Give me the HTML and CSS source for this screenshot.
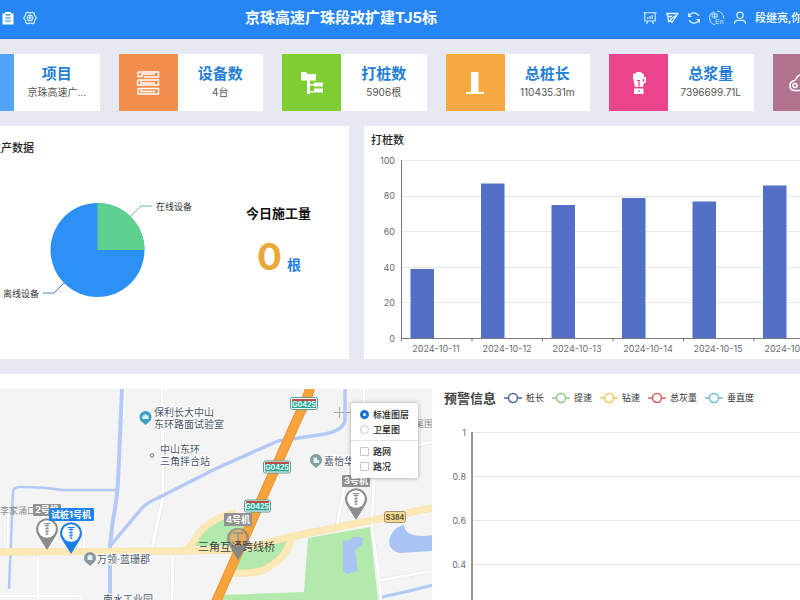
FILE: index.html
```html
<!DOCTYPE html>
<html lang="zh-CN">
<head>
<meta charset="utf-8">
<title>京珠高速广珠段改扩建TJ5标</title>
<link rel="stylesheet" href="styles.css">
</head>
<body>
<header class="topbar">
  <nav class="tools" aria-label="菜单">
    <button class="icon-btn" aria-label="记录"><svg width="14" height="14" viewBox="0 0 14 14"><path d="M1.5 2.5H4V1H10V2.5H12.5V13.5H1.5Z" fill="#fff"/><path d="M4.5 3.8H9.5M4 7H10M4 10H10" stroke="#2786f6" stroke-width="1.2"/></svg></button>
    <button class="icon-btn" aria-label="设置"><svg width="14" height="14" viewBox="0 0 14 14" fill="none" stroke="#d8f2ff" stroke-width="1.2" stroke-linejoin="round"><path d="M4.5 1.2L5.800 1.800H8.200L9.500 1.200L11.300 2.300L11.200 3.700L12.400 5.600L13.400 7L12.400 8.400L11.200 10.300L11.300 11.700L9.500 12.800L8.200 12.200H5.800L4.500 12.800L2.700 11.700L2.800 10.300L1.600 8.400L.6 7L1.600 5.600L2.800 3.700L2.700 2.300Z"/><path d="M5.500 4.400H8.500L10 7L8.500 9.600H5.500L4 7Z"/><circle cx="7" cy="7" r=".8"/></svg></button>
  </nav>
  <h1>京珠高速广珠段改扩建TJ5标</h1>
  <div class="user">
    <button class="icon-btn" aria-label="大屏"><svg width="14" height="14" viewBox="0 0 14 14" fill="none" stroke="#d8f2ff" stroke-width="1.1"><path d="M.5 1.800H13.500M1.800 1.800V10H12.200V1.800M4.800 10L3.500 13M9.200 10L10.500 13M4.800 6V8M7 5V8M9.200 4V8"/></svg></button>
    <button class="icon-btn" aria-label="发送"><svg width="14" height="14" viewBox="0 0 14 14" fill="none" stroke="#e6f6ff" stroke-width="1.3" stroke-linejoin="round"><path d="M1.500 2.500H13L7 11.500L5.200 9M1.500 2.500L3 5.500H7M3 5.500L3.500 11L5.200 9L10.500 4.500"/></svg></button>
    <button class="icon-btn" aria-label="刷新"><svg width="14" height="14" viewBox="0 0 14 14" fill="none" stroke="#d8f2ff" stroke-width="1.2"><path d="M2 5.200A5.300 5.300 0 0 1 11.800 5M12 8.800A5.300 5.300 0 0 1 2.200 9M1.600 2.300V5.300H4.500M12.400 11.700V8.700H9.500"/></svg></button>
    <button class="icon-btn" aria-label="语言"><svg width="16" height="16" viewBox="0 0 16 16" fill="none" stroke="#c9ebff"><path d="M6 14.800A7 7 0 0 1 5 1.500M8 1A7 7 0 0 1 14.600 8.500"/><path d="M3.200 4H8.200V7H3.200ZM5.700 2.500V9"/><text x="6" y="14" class="lang">En</text></svg></button>
    <button class="icon-btn" aria-label="用户"><svg width="14" height="14" viewBox="0 0 14 14" fill="none" stroke="#d8f2ff" stroke-width="1.2"><circle cx="7" cy="4.300" r="3.200"/><path d="M1.500 13V12.200Q1.500 9.300 4.500 9.300H9.500Q12.500 9.300 12.500 12.200V13"/></svg></button>
    <span>段继亮,你好</span>
  </div>
</header>

<main>
<section class="cards">
  <article class="card"><div class="card-icon sky"></div><div class="card-body"><h2>项目</h2><p>京珠高速广...</p></div></article>
  <article class="card"><div class="card-icon orange"><svg width="24" height="24" viewBox="0 0 24 24" fill="none" stroke="#fff" stroke-width="1.4"><path d="M2 1V5.500H6V3H19M2 1H22.500V6H8M1.500 9V14H22.500V9H5V12H19M1.500 9H5M2 17.500V23H22.500V17.500H5V20.500H19M2 17.500H5"/></svg></div><div class="card-body"><h2>设备数</h2><p>4台</p></div></article>
  <article class="card"><div class="card-icon green"><svg width="24" height="24" viewBox="0 0 24 24" fill="#fff"><path d="M1 1H6L7.500 3H16V9.500H10V13H14V11.500H23V15.500H14V14.500H10V20H14V17.500H23V21.500H10V23H7V9.500H1Z"/></svg></div><div class="card-body"><h2>打桩数</h2><p>5906根</p></div></article>
  <article class="card"><div class="card-icon amber"><svg width="24" height="24" viewBox="0 0 24 24" fill="#fff"><path d="M8 1H15.500V21H21V23H3V21H8Z"/></svg></div><div class="card-body"><h2>总桩长</h2><p>110435.31m</p></div></article>
  <article class="card"><div class="card-icon pink"><svg width="24" height="24" viewBox="0 0 24 24"><path d="M6 3L9 2L10 1H14L15 2.500L17 3V6H19V11L16.500 13L16 16H8L6 7ZM7 17.500H16.500V23H7Z" fill="#fff"/><path d="M12 9V16M10 9.500H13M16.500 7.500V11M11 20H13" stroke="#ec448c" stroke-width="1.2"/></svg></div><div class="card-body"><h2>总浆量</h2><p>7396699.71L</p></div></article>
  <article class="card"><div class="card-icon mauve"><svg width="28" height="24" viewBox="0 0 28 24" fill="none" stroke="#fff" stroke-width="1.6"><path d="M6 19.500A5 5 0 0 1 5 10Q7 10 8 8A7 7 0 0 1 21 8Q26 9 26 14T21 19.500Z"/><circle cx="7" cy="14.500" r="2"/><path d="M12 14H19"/></svg></div><div class="card-body"><h2>总灰量</h2><p>0t</p></div></article>
</section>

<section class="panels">
  <article class="panel production">
    <h3>生产数据</h3>
    <div class="production-body">
      <svg class="pie" width="210" height="110" viewBox="0 195 210 110">
        <circle cx="97.500" cy="250" r="47" fill="#2c90f4"/>
        <path d="M97.500 250V203A47 47 0 0 1 144.500 250Z" fill="#5dd18e"/>
        <path d="M131 216L141 206H152" fill="none" stroke="#62b99b"/>
        <path d="M64 283L54 293H43" fill="none" stroke="#4a86b8"/>
        <text x="156" y="210" class="pie-label">在线设备</text>
        <text x="3" y="297" class="pie-label">离线设备</text>
      </svg>
      <div class="today"><h4>今日施工量</h4><p><strong>0</strong><span>根</span></p></div>
    </div>
  </article>
  <article class="panel piles">
    <h3>打桩数</h3>
    <svg class="bar-chart" width="436" height="212" viewBox="364 147 436 212">
      <path d="M401 160.500H800M401 196.500H800M401 231.500H800M401 267.500H800M401 302.500H800" stroke="#e3e8ef"/>
      <g fill="#546fc6">
        <rect x="410.500" y="269" width="23.500" height="69"/>
        <rect x="481" y="183.500" width="23.500" height="155"/>
        <rect x="551.500" y="205" width="23.500" height="133"/>
        <rect x="622" y="198" width="23.500" height="140"/>
        <rect x="692.500" y="201.500" width="23.500" height="137"/>
        <rect x="763" y="185.500" width="23.500" height="153"/>
      </g>
      <path d="M401.500 160V341M401 338.500H800M472 338V341.500M542.500 338V341.500M613 338V341.500M683.500 338V341.500M754 338V341.500" stroke="#74777e" fill="none"/>
      <g class="tick end"><text x="395" y="164">100</text><text x="395" y="199">80</text><text x="395" y="235">60</text><text x="395" y="271">40</text><text x="395" y="306">20</text><text x="395" y="342">0</text></g>
      <g class="tick mid"><text x="436" y="352">2024-10-11</text><text x="507" y="352">2024-10-12</text><text x="577" y="352">2024-10-13</text><text x="648" y="352">2024-10-14</text><text x="718" y="352">2024-10-15</text><text x="789" y="352">2024-10-16</text></g>
    </svg>
  </article>
</section>

<section class="bottom">
  <div class="map">
    <svg class="map-canvas" viewBox="0 389 432 211" preserveAspectRatio="xMinYMin slice">
      <rect y="389" width="432" height="211" fill="#f4f4f4"/>
      <path d="M308 538L370 527L378 600H218L222 595L304 592Z" fill="#b2eaae"/>
      <path d="M190 546Q202 525 225 518H251L239 546Z" fill="#b2eaae"/>
      <path d="M243 552Q265 545 287 541Q283 560 262 568Q248 571 232 575Z" fill="#b2eaae"/>
      <g fill="none" stroke="#e0e0e0" stroke-width="4">
        <path d="M162 389L163 497L152 548M125 389L124 418M38 557V601M173 557L172 601M84 528V550M0 596H81V601M8 505V550"/>
        <path d="M348 470L337 525M364 389V412L374 478L372 527L382 601M382 580L432 571M417 445L432 442"/>
      </g>
      <g fill="none" stroke="#fff" stroke-width="3">
        <path d="M162 389L163 497L152 548M125 389L124 418M38 557V601M173 557L172 601M84 528V550M0 596H81V601M8 505V550"/>
        <path d="M348 470L337 525M364 389V412L374 478L372 527L382 601M382 580L432 571M417 445L432 442"/>
      </g>
      <g fill="none" stroke="#b3c9f6" stroke-linejoin="round">
        <path d="M122 389L118 482Q117 500 113 520L110 545V601" stroke-width="4"/>
        <path d="M9 589L13 492Q13 487 20 487Q45 487 62 490L117 490" stroke-width="2.5"/>
        <path d="M111 545L142 508Q148 502 158 498L215 469Q258 450 278 441L325 434Q344 430 345 420V389" stroke-width="3.5"/>
        <path d="M382 597L405 592L433 585" stroke-width="3"/>
      </g>
      <path d="M343 541L350 540L353 537L363 537L362 545L355 550L358 571L347 574L343 571ZM403 525Q391 529 389 541Q389 551 400 553L433 551V535Q405 539 404 525Z" fill="#aac4f4"/>
      <g fill="none" stroke="#f7e0a2" stroke-width="7"><path d="M0 552L182 551Q190 550 197 536Q207 520 236 512"/><path d="M182 551L238 550L290 537L432 508"/><path d="M291 537Q288 558 263 570Q252 574 230 573"/></g>
      <g fill="none" stroke="#fde9b5" stroke-width="6"><path d="M0 552L182 551Q190 550 197 536Q207 520 236 512"/><path d="M182 551L238 550L290 537L432 508"/><path d="M291 537Q288 558 263 570Q252 574 230 573"/></g>
      <path d="M310 388Q307 400 299 415L216 602" fill="none" stroke="#e6983d" stroke-width="10"/>
      <path d="M310 388Q307 400 299 415L216 602" fill="none" stroke="#f8a33b" stroke-width="8"/>
      <path d="M334 412.500H344M339.500 407V418M346 412.500H352" stroke="#aaa"/>

      <g class="place">
        <text x="154" y="416">保利长大中山</text><text x="154" y="428">东环路面试验室</text>
        <text x="160" y="453">中山东环</text><text x="160" y="465">三角拌合站</text>
        <text x="97" y="563">万领·蓝珊郡</text><text x="103" y="603">南水工业园</text><text x="324" y="465">嘉怡华庭</text>
      </g>
      <g class="village"><text x="0" y="514">李家涌口</text><text x="415" y="427">尾围</text></g>
      <circle cx="152" cy="455.500" r="1.700" fill="#fff" stroke="#6b7488"/>
      <path d="M145.500 425L141.500 421.500A6 6 0 1 1 149.500 421.500Z" fill="#3d9fc6"/>
      <path d="M142.500 419V416L145.500 414L148.500 416V419Z" fill="#d8f3fb"/>
      <path d="M90 566L85.500 562A6 6 0 1 1 94.500 562Z" fill="#8798a3"/>
      <path d="M316 468L311.500 464A6 6 0 1 1 320.500 464Z" fill="#7e9f9d"/>
      <path d="M87.500 560V556L90 554.500L92.500 556V560ZM313.500 463V457.500H317V460H319V463Z" fill="#e5edf0"/>

      <g class="shield">
        <rect x="290.500" y="397.500" width="27" height="12" rx="2" fill="#fff" stroke="#579b91"/><rect x="292" y="399" width="24" height="9" fill="#28a493"/><rect x="292" y="399" width="24" height="2" fill="#bf4a43"/><text x="304" y="407">G0425</text>
        <rect x="263.500" y="461" width="27" height="12" rx="2" fill="#fff" stroke="#579b91"/><rect x="265" y="462.500" width="24" height="9" fill="#28a493"/><rect x="265" y="462" width="24" height="2" fill="#bf4a43"/><text x="277" y="470">G0425</text>
        <rect x="244.500" y="500" width="26" height="12" rx="2" fill="#fff" stroke="#579b91"/><rect x="246" y="501.500" width="23" height="9" fill="#28a493"/><rect x="246" y="501" width="23" height="2" fill="#bf4a43"/><text x="257" y="509">G0425</text>
        <rect x="384.500" y="511.500" width="21" height="11" rx="2" fill="#f5dc96" stroke="#9c9170"/><text x="395" y="520" class="dark">S384</text>
      </g>

      <defs>
        <g id="pin"><path d="M0 21L-9 6.500A11 11 0 1 1 9 6.500Z"/><circle r="8.800" fill="#fff"/><path d="M-3.500 -5.500H3.500M-2.500 -3.500H2.500M0 -5V6M-2 0L2 -1M-2 3L2 2M-1 5.500L1.500 5" stroke="currentColor"/></g>
      </defs>
      <use href="#pin" x="47" y="529" fill="#8c8c8c" color="#8c8c8c"/>
      <use href="#pin" x="356" y="499" fill="#8c8c8c" color="#8c8c8c"/>
      <g opacity=".8"><path d="M238 560L229 545A11 11 0 1 1 247 545Z" fill="#858585"/><circle cx="238" cy="538" r="8.500" fill="#e6a75d"/><path d="M233 533H243M238 533V545" stroke="#858585" stroke-width="1.5"/></g>
      <text x="198" y="551" class="bridge">三角互通跨线桥</text>
      <path d="M238 560L230 546H246Z" fill="#858585"/>
      <use href="#pin" x="71" y="533" fill="#1b7fe6" color="#1b7fe6"/>
      <g class="machine" fill="#929292">
        <rect x="33" y="504" width="28" height="12" rx="1"/><text x="47" y="513">2号机</text>
        <rect x="342" y="475" width="28" height="12" rx="1"/><text x="356" y="484">3号机</text>
        <rect x="224" y="513" width="28" height="13" rx="1"/><text x="238" y="523">4号机</text>
        <rect x="49" y="508" width="45" height="13" rx="1" fill="#1f83eb"/><text x="71" y="518">试桩1号机</text>
      </g>
    </svg>
    <form class="layers">
      <label><input type="radio" name="layer" checked>标准图层</label>
      <label><input type="radio" name="layer">卫星图</label>
      <hr>
      <label><input type="checkbox">路网</label>
      <label><input type="checkbox">路况</label>
    </form>
  </div>
  <article class="alerts">
    <div class="alerts-head">
      <h3>预警信息</h3>
      <ul class="legend">
        <li class="navy"><svg width="18" height="12" viewBox="0 0 18 12"><path d="M0 6H18"/><circle cx="9" cy="6" r="4.500"/></svg>桩长</li>
        <li class="leaf"><svg width="18" height="12" viewBox="0 0 18 12"><path d="M0 6H18"/><circle cx="9" cy="6" r="4.500"/></svg>提速</li>
        <li class="gold"><svg width="18" height="12" viewBox="0 0 18 12"><path d="M0 6H18"/><circle cx="9" cy="6" r="4.500"/></svg>钻速</li>
        <li class="red"><svg width="18" height="12" viewBox="0 0 18 12"><path d="M0 6H18"/><circle cx="9" cy="6" r="4.500"/></svg>总灰量</li>
        <li class="cyan"><svg width="18" height="12" viewBox="0 0 18 12"><path d="M0 6H18"/><circle cx="9" cy="6" r="4.500"/></svg>垂直度</li>
      </ul>
    </div>
    <svg class="line-chart" width="356" height="180" viewBox="444 420 356 180">
      <path d="M472 432.500H800M472 476.500H800M472 520.500H800M472 564.500H800" stroke="#e4e6ea"/>
      <path d="M472 432V600" stroke="#96989c" stroke-width="2"/>
      <g class="tick end"><text x="466" y="436">1</text><text x="466" y="480">0.8</text><text x="466" y="524">0.6</text><text x="466" y="568">0.4</text></g>
    </svg>
  </article>
</section>
</main>
</body>
</html>
```
FILE: styles.css
```css
* { box-sizing: border-box; }
body {
  margin: 0;
  min-height: 100vh;
  display: flex;
  flex-direction: column;
  overflow: hidden;
  background: #e6e8f2;
  color: #222;
  font: 10px/16px Inter, "Noto Sans CJK SC", sans-serif;
}
h1, h2, h3, h4, p, ul { margin: 0; padding: 0; }
svg { display: block; flex: none; }

.topbar {
  display: grid;
  grid-template-columns: 245px 398px auto;
  align-items: center;
  height: 39px;
  padding-bottom: 3px;
  background: #2786f6;
  border-bottom: 1px solid #1f72d8;
  color: #fff;
  white-space: nowrap;
}
.topbar h1 { font-size: 15px; line-height: 20px; font-weight: 700; }
.tools, .user { display: flex; align-items: center; gap: 8px; }
.tools { padding-left: 1px; }
.user span { font-size: 11px; font-weight: 500; }
.icon-btn { display: block; padding: 0; border: 0; background: none; }
.lang { fill: #c9ebff; stroke: none; font-size: 7px; }

main { flex: 1; display: flex; flex-direction: column; }
.cards {
  display: grid;
  grid-template-columns: repeat(6, 1fr);
  gap: 19px;
  width: calc(100% + 162px);
  margin: 15px 0 15px -45px;
}
.card { display: grid; grid-template-columns: 59px 1fr; height: 57px; background: #fff; }
.card-icon { display: grid; place-items: center; }
.card-body { padding-top: 10px; text-align: center; }
.card-body h2 { color: #2480d4; font-size: 15px; line-height: 20px; }
.card-body p { color: #555; }
.sky { background: #51a5f6; }
.orange { background: #f38e4c; }
.green { background: #7fce34; }
.amber { background: #f6a940; }
.pink { background: #ec448c; }
.mauve { background: #b1738e; }

.panels { display: grid; grid-template-columns: 375px 1fr; gap: 15px; margin-left: -26px; }
.panel { min-height: 233px; background: #fff; overflow: hidden; }
.panel h3 { font-size: 11px; line-height: 16px; font-weight: 500; }
.production { padding: 14px 0 0 16px; }
.production-body { display: flex; gap: 36px; padding: 39px 0 0 10px; }
.pie-label { font-size: 9px; fill: #333; }
.today { padding-top: 8px; }
.today h4 { color: #111; font-size: 13px; line-height: 20px; }
.today p { display: flex; align-items: baseline; gap: 5px; padding: 12px 0 0 11px; line-height: 44px; }
.today strong { color: #eaa93c; font-size: 37px; }
.today span { color: #2480e0; font-size: 14px; font-weight: 700; }
.piles h3 { padding: 6px 0 0 7px; height: 21px; }
.tick { font-size: 9px; fill: #686b72; }
.end { text-anchor: end; }
.mid { text-anchor: middle; }

.bottom {
  flex: 1;
  display: grid;
  grid-template-columns: 54% 1fr;
  margin-top: 15px;
  padding-top: 15px;
  background: #fff;
}
.map { position: relative; }
.map-canvas { width: 100%; height: 100%; }
.place { font-size: 10px; fill: #49536b; stroke: #fff; stroke-width: 2px; paint-order: stroke; }
.village { font-size: 9px; fill: #8c8c8c; }
.bridge { font-size: 11px; fill: #404040; }
.shield { font-size: 7px; font-weight: 700; fill: #e9fffb; text-anchor: middle; }
.dark { fill: #57502f; }
.machine { font-size: 9px; font-weight: 700; text-anchor: middle; }
.machine text { fill: #fff; }
.layers {
  position: absolute;
  top: 14px;
  right: 14px;
  width: 67px;
  padding: 4px 0;
  border-radius: 2px;
  background: #fff;
  box-shadow: 0 0 4px rgba(0, 0, 0, .35);
  color: #222;
  font-size: 9px;
  font-weight: 500;
}
.layers label { display: flex; align-items: center; gap: 4px; height: 15px; padding-left: 9px; white-space: nowrap; }
.layers input { appearance: none; width: 9px; height: 9px; margin: 0; border: 1px solid #c4c8ce; border-radius: 1px; background: #fff; }
.layers input[type="radio"] { border-radius: 50%; }
.layers input:checked { border: 3px solid #1775d1; }
.layers hr { margin: 3px 0; border: 0; border-top: 1px solid #e4e4e4; }

.alerts { padding-left: 12px; overflow: hidden; }
.alerts-head { display: flex; align-items: center; gap: 8px; height: 18px; margin-bottom: 13px; }
.alerts h3 { color: #444; font-size: 13px; line-height: 18px; }
.legend { display: flex; gap: 8px; list-style: none; color: #333; font-size: 9px; white-space: nowrap; }
.legend li { display: flex; align-items: center; gap: 4px; }
.legend path, .legend circle { fill: #fff; stroke-width: 1.5px; }
.navy svg { stroke: #4e68a8; }
.leaf svg { stroke: #91c77d; }
.gold svg { stroke: #f2c85b; }
.red svg { stroke: #d75d5d; }
.cyan svg { stroke: #6fbcd8; }
```
